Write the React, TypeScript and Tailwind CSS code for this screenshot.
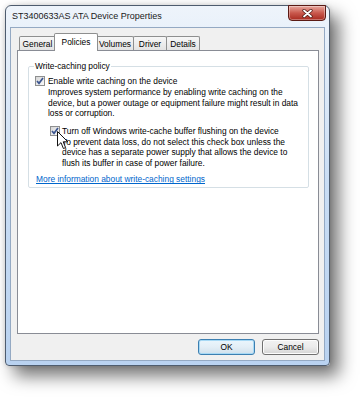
import React from "react";

function Check() {
  return (
    <span className="flex h-[10px] w-[10px] shrink-0 items-center justify-center border border-[#8e8f8f] bg-gradient-to-br from-[#d6d6d6] to-[#fafafa]">
      <svg width="8" height="8" viewBox="0 0 8 8">
        <path d="M1 4 L3 6.3 L7 1" stroke="#3b5590" strokeWidth="1.7" fill="none" />
      </svg>
    </span>
  );
}

function Tab({ label, w, extra }: { label: string; w: string; extra?: string }) {
  return (
    <div
      className={`flex h-[15px] items-center justify-center rounded-t-[2px] border border-b-0 border-[#8e8f8f] bg-gradient-to-b from-[#f7f7f7] to-[#e2e2e2] ${w} ${extra ?? ""}`}
    >
      {label}
    </div>
  );
}

export default function App() {
  return (
    <div className="relative h-[397px] w-[363px] overflow-hidden bg-white font-['Liberation_Sans',Arial,sans-serif] text-[8.4px] leading-[10.6px] text-black">
      <div className="ml-[5px] mt-[5px] flex h-[361px] w-[325px] flex-col rounded-t-[6px] rounded-b-[4px] border border-[#4e5c6e] bg-gradient-to-b from-[#eef4fb] via-[#c9ddf4] to-[#b9d2f0] shadow-[0_0_5px_rgba(0,0,0,0.15),9px_10px_17px_rgba(0,0,0,0.55)]">
        {/* title bar */}
        <div className="flex h-[21px] shrink-0 items-start justify-between pl-[6px] pr-[3px]">
          <span className="mt-[5px] text-[9px] leading-[11px] text-[#1a1a1a]">ST3400633AS ATA Device Properties</span>
          <div className="-mt-px flex h-[16px] w-[38px] items-center justify-center rounded-b-[4px] border border-[#5a1a14] bg-gradient-to-b from-[#e7a89f] via-[#c9584d] to-[#a8281e] shadow-[inset_0_0_0_1px_rgba(255,255,255,0.35)]">
            <svg width="11" height="9" viewBox="0 0 11 9">
              <path d="M2 1.5 L9 7.5 M9 1.5 L2 7.5" stroke="#4a1510" strokeWidth="3.2" strokeLinecap="round" />
              <path d="M2 1.5 L9 7.5 M9 1.5 L2 7.5" stroke="#ffffff" strokeWidth="1.8" strokeLinecap="round" />
            </svg>
          </div>
        </div>
        {/* client */}
        <div className="mx-[4px] mb-[4px] flex flex-1 flex-col border border-[#94a9c3] bg-[#f0f0f0] pl-[6px] pr-[5px] pt-[5px]">
          {/* tabs */}
          <div className="flex h-[18px] shrink-0 items-end pl-[2px]">
            <Tab label="General" w="w-[37px]" />
            <div className="relative z-10 -mx-[2px] flex h-[18px] w-[44px] items-start justify-center rounded-t-[2px] border border-b-0 border-[#8e8f8f] bg-white pt-[3px]">
              Policies
            </div>
            <Tab label="Volumes" w="w-[38px]" />
            <Tab label="Driver" w="w-[34px]" extra="-ml-px" />
            <Tab label="Details" w="w-[34px]" extra="-ml-px" />
          </div>
          {/* panel */}
          <div className="relative z-0 -mt-px h-[284px] shrink-0 border border-[#898c95] bg-white">
            <fieldset className="ml-[10px] mr-[9px] mt-[10px] rounded-[2px] border border-[#d5dfe5] pb-[2px] pl-[6px]">
              <legend className="-ml-px px-[1px]">Write-caching policy</legend>
              <div className="mt-[4px] flex items-center gap-[3px]">
                <Check />
                <span>Enable write caching on the device</span>
              </div>
              <div className="ml-[13px] mt-[1px] whitespace-nowrap">
                Improves system performance by enabling write caching on the
                <br />
                device, but a power outage or equipment failure might result in data
                <br />
                loss or corruption.
              </div>
              <div className="ml-[15px] mt-[7px] flex items-center gap-[2px]">
                <Check />
                <span>Turn off Windows write-cache buffer flushing on the device</span>
              </div>
              <div className="ml-[27px] whitespace-nowrap">
                To prevent data loss, do not select this check box unless the
                <br />
                device has a separate power supply that allows the device to
                <br />
                flush its buffer in case of power failure.
              </div>
              <div className="ml-[1px] mt-[6px] text-[#0066cc] underline">More information about write-caching settings</div>
            </fieldset>
          </div>
          {/* buttons */}
          <div className="mt-[5px] flex shrink-0 justify-end gap-[7px]">
            <div className="flex h-[16px] w-[57px] items-center justify-center rounded-[3px] border border-[#3c7fb1] bg-gradient-to-b from-[#eaf6fd] via-[#e3eef6] to-[#cfe0ec] shadow-[inset_0_0_0_1px_#a7d9f5]">
              OK
            </div>
            <div className="flex h-[16px] w-[57px] items-center justify-center rounded-[3px] border border-[#707070] bg-gradient-to-b from-[#f2f2f2] via-[#ebebeb] to-[#d4d4d4] shadow-[inset_0_0_0_1px_#fcfcfc]">
              Cancel
            </div>
          </div>
        </div>
      </div>
      {/* mouse cursor */}
      <svg className="absolute left-[57px] top-[131px]" width="12" height="19" viewBox="0 0 12 19">
        <path d="M0.5 0.5 L0.5 15 L4 11.6 L6.4 17.5 L8.6 16.6 L6.2 10.8 L10.8 10.8 Z" fill="#ffffff" stroke="#111111" strokeWidth="1" strokeLinejoin="round" />
      </svg>
    </div>
  );
}
